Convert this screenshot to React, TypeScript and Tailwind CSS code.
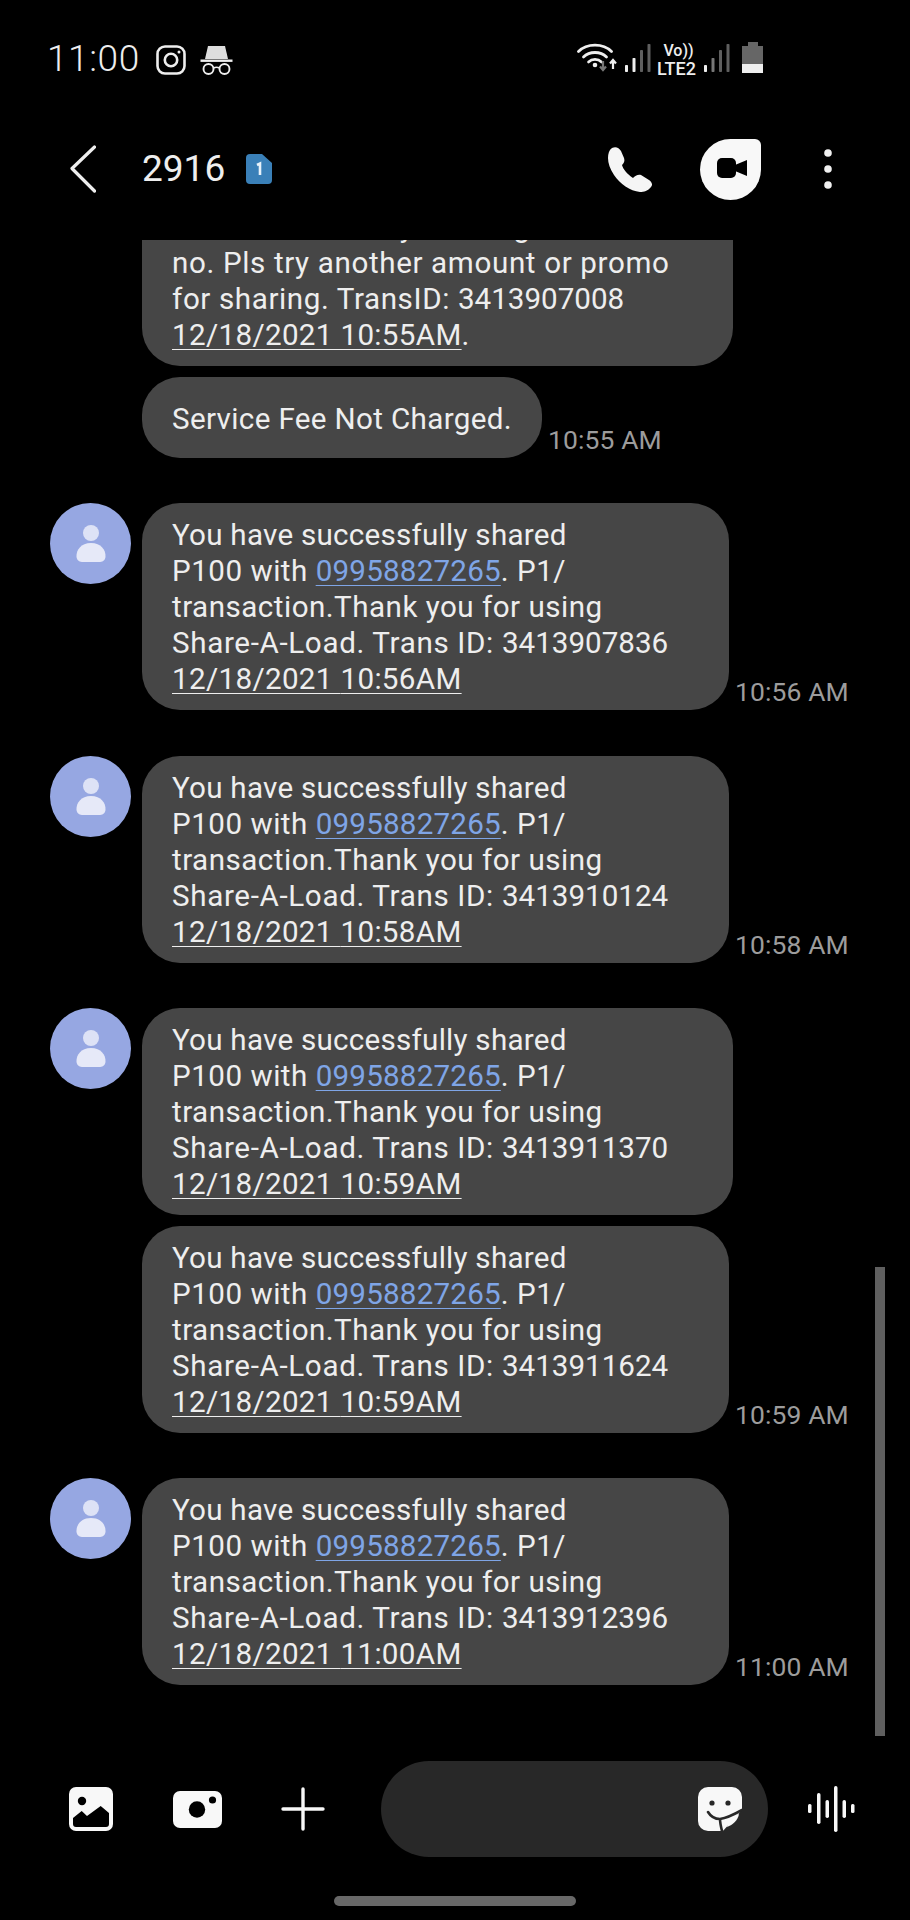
import React from "react";

function Signal({ colors }: { colors: string[] }) {
  const bars = [
    { x: 0, h: 7 },
    { x: 7.5, h: 14 },
    { x: 15, h: 22 },
    { x: 22.5, h: 28 },
  ];
  return (
    <svg width="26" height="28" viewBox="0 0 26 28">
      {bars.map((b, i) => (
        <rect key={i} x={b.x} y={28 - b.h} width="3" height={b.h} rx="0.8" fill={colors[i]} />
      ))}
    </svg>
  );
}

function StatusBar() {
  return (
    <div className="h-[110px] flex items-start justify-between pt-[43px] pl-[47px] pr-[147px]">
      <div className="flex items-start">
        <span className="text-[37px] leading-[32px] font-light text-[#eeeeee] tracking-[0.6px]">11:00</span>
        <svg className="ml-[16px] mt-[2px]" width="30" height="30" viewBox="0 0 30 30" fill="none" stroke="#eeeeee" strokeWidth="2.6">
          <rect x="1.5" y="1.5" width="27" height="27" rx="7.5" />
          <circle cx="15" cy="15" r="6.2" />
          <circle cx="23" cy="7" r="1.5" fill="#eeeeee" stroke="none" />
        </svg>
        <svg className="ml-[14px] mt-[2px]" width="34" height="31" viewBox="0 0 34 31" fill="none">
          <path d="M8 1 H25 L28 14 H5 Z" fill="#dddddd" />
          <rect x="0.5" y="14.5" width="32" height="2.4" fill="#eeeeee" />
          <circle cx="8.5" cy="24" r="5" stroke="#eeeeee" strokeWidth="1.9" />
          <circle cx="24.5" cy="24" r="5" stroke="#eeeeee" strokeWidth="1.9" />
          <path d="M13.5 23 Q16.5 21.5 19.5 23" stroke="#eeeeee" strokeWidth="1.6" />
        </svg>
      </div>
      <div className="flex items-start -mt-[1px]">
        <svg width="42" height="30" viewBox="0 0 42 30" fill="none">
          <path d="M1.5 9.5 C10 1 26 1 34.5 9.5" stroke="#eeeeee" strokeWidth="2.8" strokeLinecap="round" />
          <path d="M6.5 15 C12.5 9 23.5 9 29.5 15" stroke="#eeeeee" strokeWidth="2.8" strokeLinecap="round" />
          <path d="M11.5 20 C15 16.5 21 16.5 24.5 20" stroke="#eeeeee" strokeWidth="2.6" strokeLinecap="round" />
          <circle cx="18" cy="23" r="2.3" fill="#eeeeee" />
          <path d="M26 19 V27 M23 24.5 L26 28 L29 24.5" stroke="#777777" strokeWidth="2.2" />
          <path d="M36 27 V19 M33 21.5 L36 18 L39 21.5" stroke="#eeeeee" strokeWidth="2.2" />
        </svg>
        <div className="ml-[6px] mt-[2px]">
          <Signal colors={["#eeeeee", "#eeeeee", "#5f5f5f", "#5f5f5f"]} />
        </div>
        <div className="w-[46px] ml-[3px] flex flex-col items-center text-[#eeeeee] font-medium">
          <span className="text-[16px] leading-[17px] pl-[4px]">Vo))</span>
          <span className="text-[18px] leading-[15px] mt-[2px]">LTE2</span>
        </div>
        <div className="ml-[4.5px] mt-[2px]">
          <Signal colors={["#eeeeee", "#777777", "#5f5f5f", "#5f5f5f"]} />
        </div>
        <svg className="ml-[12px]" width="21" height="31" viewBox="0 0 21 31">
          <rect x="6" y="0" width="10" height="5" fill="#666666" />
          <rect x="0" y="4" width="21" height="19" fill="#666666" />
          <rect x="0" y="22" width="21" height="9" fill="#eeeeee" />
        </svg>
      </div>
    </div>
  );
}

function Header() {
  return (
    <div className="h-[130px] flex items-start pt-[29px] text-white">
      <svg className="ml-[70px] mt-[6px]" width="26" height="48" viewBox="0 0 26 48" fill="none" stroke="#eeeeee" strokeWidth="3.2" strokeLinecap="round" strokeLinejoin="round">
        <path d="M24.5 2 L2 23.5 L24.5 46" />
      </svg>
      <span className="ml-[46px] mt-[9px] text-[37px] leading-[42px] text-[#eeeeee]">2916</span>
      <svg className="ml-[21px] mt-[15px]" width="26" height="30" viewBox="0 0 26 30">
        <path d="M4 0 H16 L26 9 V26 a4 4 0 0 1 -4 4 H4 a4 4 0 0 1 -4 -4 V4 a4 4 0 0 1 4 -4 Z" fill="#3a80b8" />
        <path d="M11 11 L14 9.5 V21" stroke="#e8f2fa" strokeWidth="2.6" fill="none" />
      </svg>
      <svg className="ml-[336px] mt-[8px]" width="46" height="46" viewBox="0 0 46 46" fill="#f5f5f5">
        <path d="M4 1 C8 -1 11 1 13 4 L16 11 C17 14 16 16 14 18 C15 22 19 27 25 31 C27 29 30 27 33 28 L41 33 C44 35 45 38 43 40 C40 44 36 45 32 45 C22 44 12 37 6 28 C2 22 0 16 0 11 C0 7 1 3 4 1 Z" />
      </svg>
      <svg className="ml-[46px]" width="61" height="61" viewBox="0 0 61 61">
        <path d="M30.5 0 H55 a6 6 0 0 1 6 6 V30.5 A30.5 30.5 0 1 1 30.5 0 Z" fill="#f8f8f8" />
        <rect x="17" y="19" width="19" height="20" rx="5" fill="#000000" />
        <path d="M35 26 L47 21 V37 L35 32 Z" fill="#000000" />
      </svg>
      <svg className="ml-[63px] mt-[10px]" width="8" height="40" viewBox="0 0 8 40" fill="#f0f0f0">
        <circle cx="4" cy="4" r="3.8" />
        <circle cx="4" cy="20" r="3.8" />
        <circle cx="4" cy="36" r="3.8" />
      </svg>
    </div>
  );
}

function Avatar() {
  return (
    <svg className="shrink-0" width="81" height="81" viewBox="0 0 81 81">
      <circle cx="40.5" cy="40.5" r="40.5" fill="#96a7e2" />
      <circle cx="41" cy="30" r="8" fill="#dde2f6" />
      <path d="M41 40 C51 40 56 47 55.5 54 C55 58 52 59 49 59 H33 C30 59 27 58 26.5 54 C26 47 31 40 41 40 Z" fill="#e6e9f8" />
    </svg>
  );
}

function Bubble({ width, time, avatar, children, className = "" }: {
  width: string;
  time?: string;
  avatar?: boolean;
  children: React.ReactNode;
  className?: string;
}) {
  return (
    <div className={`flex items-end ${className}`}>
      <div className="w-[142px] shrink-0 self-start pl-[50px]">{avatar && <Avatar />}</div>
      <div className={`${width} bg-[#464646] rounded-[38px] pl-[30px] pt-[13.5px] pb-[13px] text-[29.6px] leading-[36px] text-[#eeeeee] whitespace-nowrap`}>
        {children}
      </div>
      {time && <span className="ml-[6px] mb-[2px] text-[26.5px] leading-[32px] tracking-[0.1px] text-[#9c9c9c] whitespace-nowrap">{time}</span>}
    </div>
  );
}

function ShareText({ id, date }: { id: string; date: string }) {
  return (
    <>
      <div className="tracking-[0.25px]">You have successfully shared</div>
      <div>
        <span className="tracking-[0.5px]">P100 with </span>
        <span className="tracking-[0.2px] text-[#7fa5e6] underline decoration-1 underline-offset-[4px]">09958827265</span>
        <span className="tracking-[0.5px]">. P1/</span>
      </div>
      <div className="tracking-[0.48px]">transaction.Thank you for using</div>
      <div>
        <span className="tracking-[0.65px]">Share-A-Load. Trans ID: </span>
        {id}
      </div>
      <div>
        <span className="tracking-[0.33px] underline decoration-1 underline-offset-[4px]">12/18/2021 {date}</span>
      </div>
    </>
  );
}

function Messages() {
  return (
    <div className="relative h-[1505px] overflow-hidden">
      <div className="flex flex-col -mt-[44.5px]">
        <Bubble width="w-[591px]">
          <div className="tracking-[0.6px]">Invalid amount by sending to this</div>
          <div className="tracking-[0.63px]">no. Pls try another amount or promo</div>
          <div>
            <span className="tracking-[0.6px]">for sharing. TransID: </span>
            3413907008
          </div>
          <div className="tracking-[0.33px]">
            <span className="underline decoration-1 underline-offset-[4px]">12/18/2021 10:55AM</span>.
          </div>
        </Bubble>
        <Bubble width="w-[400px]" time="10:55 AM" className="mt-[11px]">
          <div className="pt-[10px] pb-[8px] tracking-[0.35px]">Service Fee Not Charged.</div>
        </Bubble>
        <Bubble width="w-[587px]" time="10:56 AM" avatar className="mt-[45.5px]">
          <ShareText id="3413907836" date="10:56AM" />
        </Bubble>
        <Bubble width="w-[587px]" time="10:58 AM" avatar className="mt-[46.5px]">
          <ShareText id="3413910124" date="10:58AM" />
        </Bubble>
        <Bubble width="w-[591px]" avatar className="mt-[45.5px]">
          <ShareText id="3413911370" date="10:59AM" />
        </Bubble>
        <Bubble width="w-[587px]" time="10:59 AM" className="mt-[11.5px]">
          <ShareText id="3413911624" date="10:59AM" />
        </Bubble>
        <Bubble width="w-[587px]" time="11:00 AM" avatar className="mt-[45.5px]">
          <ShareText id="3413912396" date="11:00AM" />
        </Bubble>
      </div>
      <div className="absolute left-[875px] top-[1027px] w-[10px] h-[469px] bg-[#5f5f5f]" />
    </div>
  );
}

function Composer() {
  return (
    <div className="h-[128px] flex items-start pt-[16px]">
      <div className="h-[96px] flex items-center">
        <svg className="ml-[69px]" width="44" height="44" viewBox="0 0 44 44">
          <rect width="44" height="44" rx="7" fill="#f8f8f8" />
          <circle cx="13" cy="14" r="4.2" fill="#000000" />
          <path d="M4 31 L12.7 24 L18 29 L31.7 19 L40 26 V37 a3 3 0 0 1 -3 3 H7 a3 3 0 0 1 -3 -3 Z" fill="#000000" />
        </svg>
        <svg className="ml-[60px]" width="49" height="37" viewBox="0 0 49 37">
          <rect width="49" height="37" rx="7" fill="#f8f8f8" />
          <circle cx="24" cy="18.5" r="8.2" fill="#000000" />
          <circle cx="39.5" cy="9" r="3.6" fill="#000000" />
        </svg>
        <svg className="ml-[59px]" width="44" height="44" viewBox="0 0 44 44" fill="none" stroke="#f8f8f8" strokeWidth="3.4" strokeLinecap="round">
          <path d="M22 2 V42 M2 22 H42" />
        </svg>
      </div>
      <div className="ml-[56px] w-[387px] h-[96px] rounded-[48px] bg-[#282828] flex items-center justify-end pr-[26px]">
        <svg width="44" height="44" viewBox="0 0 44 44">
          <rect width="44" height="44" rx="10" fill="#f8f8f8" />
          <path d="M45 22 V45 H24 Z" fill="#282828" />
          <path d="M41 27 C35 29 31 33 29 40 C35 38 40 33 41 27 Z" fill="#f8f8f8" />
          <circle cx="14" cy="16" r="2.6" fill="#282828" />
          <circle cx="30" cy="16" r="2.6" fill="#282828" />
          <path d="M10 25 C13 30 17 32 22 32 C30 31 37 27 44 23 M22 32 C22 36 23 40 24 44" fill="none" stroke="#282828" strokeWidth="2.6" strokeLinecap="round" />
        </svg>
      </div>
      <div className="h-[96px] flex items-center ml-[40px]">
        <svg width="49" height="46" viewBox="0 0 49 46" fill="#f8f8f8">
          <rect x="0" y="18" width="3.5" height="9" rx="1.5" />
          <rect x="9" y="7" width="3.5" height="31" rx="1.7" />
          <rect x="17.5" y="14" width="3.5" height="18" rx="1.7" />
          <rect x="26" y="0" width="3.5" height="46" rx="1.7" />
          <rect x="34.5" y="14" width="3.5" height="18" rx="1.7" />
          <rect x="43" y="18" width="3.5" height="9" rx="1.5" />
        </svg>
      </div>
    </div>
  );
}

export default function App() {
  return (
    <div className="w-[910px] h-[1920px] bg-black overflow-hidden font-[Roboto,sans-serif]">
      <StatusBar />
      <Header />
      <Messages />
      <Composer />
      <div className="ml-[334px] mt-[23px] w-[242px] h-[10px] rounded-full bg-[#686868]" />
    </div>
  );
}
